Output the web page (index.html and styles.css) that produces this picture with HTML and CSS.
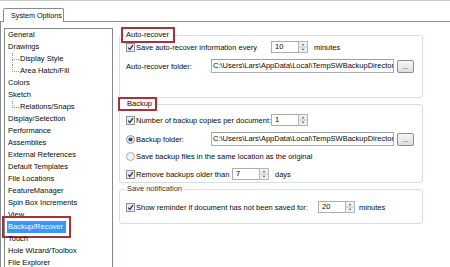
FILE: index.html
```html
<!DOCTYPE html>
<html>
<head>
<meta charset="utf-8">
<title>System Options</title>
<link rel="stylesheet" href="styles.css">
</head>
<body>
<div class="window">
  <div class="tabs"><div class="tab">System Options</div></div>
  <div class="panel">
    <ul class="tree">
      <li>General</li>
      <li>Drawings</li>
      <li class="sub mid">Display Style</li>
      <li class="sub">Area Hatch/Fill</li>
      <li>Colors</li>
      <li>Sketch</li>
      <li class="sub">Relations/Snaps</li>
      <li>Display/Selection</li>
      <li>Performance</li>
      <li>Assemblies</li>
      <li>External References</li>
      <li>Default Templates</li>
      <li>File Locations</li>
      <li>FeatureManager</li>
      <li>Spin Box Increments</li>
      <li>View</li>
      <li><span class="sel">Backup/Recover</span></li>
      <li>Touch</li>
      <li>Hole Wizard/Toolbox</li>
      <li>File Explorer</li>
    </ul>

    <div class="options">
      <fieldset class="group g1">
        <legend class="mark m-auto">Auto-recover</legend>
        <div class="row r-first">
          <label class="lbl w145"><svg class="cb" viewBox="0 0 9 9"><rect x="0.5" y="0.5" width="8" height="8" fill="#f4f6f9" stroke="#8e9095"/><rect x="1.5" y="1.5" width="6" height="6" fill="#e3e8ee"/><path d="M2.1 4.6 L3.8 6.4 L7 2.1" fill="none" stroke="#28386a" stroke-width="1.3"/></svg><span>Save auto-recover information every</span></label>
          <div class="spin"><span class="val">10</span><svg class="arrows" viewBox="0 0 10 12"><rect x="0.5" y="0.5" width="9" height="11" fill="#eef0f3" stroke="#b3b7bd"/><line x1="1" y1="6" x2="9" y2="6" stroke="#c6cacf"/><path d="M3.5 4.3 L5 2.8 L6.5 4.3 Z" fill="#4a4f57"/><path d="M3.5 7.7 L5 9.2 L6.5 7.7 Z" fill="#4a4f57"/></svg></div>
          <span class="unit">minutes</span>
        </div>
        <div class="row r-field">
          <span class="lbl w85">Auto-recover folder:</span>
          <div class="field">C:\Users\Lars\AppData\Local\TempSWBackupDirectory</div>
          <button class="browse">...</button>
        </div>
      </fieldset>

      <fieldset class="group g2">
        <legend class="mark m-backup">Backup</legend>
        <div class="row">
          <label class="lbl w145"><svg class="cb" viewBox="0 0 9 9"><rect x="0.5" y="0.5" width="8" height="8" fill="#f4f6f9" stroke="#8e9095"/><rect x="1.5" y="1.5" width="6" height="6" fill="#e3e8ee"/><path d="M2.1 4.6 L3.8 6.4 L7 2.1" fill="none" stroke="#28386a" stroke-width="1.3"/></svg><span>Number of backup copies per document:</span></label>
          <div class="spin"><span class="val">1</span><svg class="arrows" viewBox="0 0 10 12"><rect x="0.5" y="0.5" width="9" height="11" fill="#eef0f3" stroke="#b3b7bd"/><line x1="1" y1="6" x2="9" y2="6" stroke="#c6cacf"/><path d="M3.5 4.3 L5 2.8 L6.5 4.3 Z" fill="#4a4f57"/><path d="M3.5 7.7 L5 9.2 L6.5 7.7 Z" fill="#4a4f57"/></svg></div>
        </div>
        <div class="row r-field2">
          <label class="lbl w85"><svg class="cb" viewBox="0 0 9 9"><circle cx="4.5" cy="4.5" r="4" fill="#eef1f5" stroke="#8e9095"/><circle cx="4.5" cy="4.5" r="2.1" fill="#2f4f80"/></svg><span>Backup folder:</span></label>
          <div class="field">C:\Users\Lars\AppData\Local\TempSWBackupDirectory</div>
          <button class="browse">...</button>
        </div>
        <div class="row r-radio">
          <label class="lbl"><svg class="cb" viewBox="0 0 9 9"><circle cx="4.5" cy="4.5" r="4" fill="#f1f3f5" stroke="#a9acb1"/></svg><span>Save backup files in the same location as the original</span></label>
        </div>
        <div class="row r-last">
          <label class="lbl w106"><svg class="cb" viewBox="0 0 9 9"><rect x="0.5" y="0.5" width="8" height="8" fill="#f4f6f9" stroke="#8e9095"/><rect x="1.5" y="1.5" width="6" height="6" fill="#e3e8ee"/><path d="M2.1 4.6 L3.8 6.4 L7 2.1" fill="none" stroke="#28386a" stroke-width="1.3"/></svg><span>Remove backups older than</span></label>
          <div class="spin"><span class="val">7</span><svg class="arrows" viewBox="0 0 10 12"><rect x="0.5" y="0.5" width="9" height="11" fill="#eef0f3" stroke="#b3b7bd"/><line x1="1" y1="6" x2="9" y2="6" stroke="#c6cacf"/><path d="M3.5 4.3 L5 2.8 L6.5 4.3 Z" fill="#4a4f57"/><path d="M3.5 7.7 L5 9.2 L6.5 7.7 Z" fill="#4a4f57"/></svg></div>
          <span class="unit">days</span>
        </div>
      </fieldset>

      <fieldset class="group g3">
        <legend class="plain-legend">Save notification</legend>
        <div class="row">
          <label class="lbl w192"><svg class="cb" viewBox="0 0 9 9"><rect x="0.5" y="0.5" width="8" height="8" fill="#f4f6f9" stroke="#8e9095"/><rect x="1.5" y="1.5" width="6" height="6" fill="#e3e8ee"/><path d="M2.1 4.6 L3.8 6.4 L7 2.1" fill="none" stroke="#28386a" stroke-width="1.3"/></svg><span>Show reminder if document has not been saved for:</span></label>
          <div class="spin"><span class="val">20</span><svg class="arrows" viewBox="0 0 10 12"><rect x="0.5" y="0.5" width="9" height="11" fill="#eef0f3" stroke="#b3b7bd"/><line x1="1" y1="6" x2="9" y2="6" stroke="#c6cacf"/><path d="M3.5 4.3 L5 2.8 L6.5 4.3 Z" fill="#4a4f57"/><path d="M3.5 7.7 L5 9.2 L6.5 7.7 Z" fill="#4a4f57"/></svg></div>
          <span class="unit u4">minutes</span>
        </div>
      </fieldset>
    </div>
  </div>
</div>
</body>
</html>
```

FILE: styles.css
```css
* { box-sizing: border-box; }

html, body {
  margin: 0;
  padding: 0;
  background: #ffffff;
}

body {
  font-family: "Liberation Sans", Arial, sans-serif;
  font-size: 7.5px;
  color: #0a0a0a;
}

.window {
  width: 450px;
  height: 267px;
  overflow: hidden;
  border-top: 1px solid #c8cacd;
  display: flex;
  flex-direction: column;
}

.tabs {
  padding: 7px 0 0 3px;
  display: flex;
}

.tab {
  position: relative;
  z-index: 1;
  width: 61px;
  height: 14px;
  margin-bottom: -1px;
  padding: 0 0 0 7px;
  border: 1px solid #898c95;
  border-bottom: none;
  border-radius: 2px 2px 0 0;
  background: #ffffff;
  line-height: 13px;
  font-size: 7.2px;
  white-space: nowrap;
}

.panel {
  flex: 1;
  display: flex;
  align-items: flex-start;
  border-top: 1px solid #898c95;
  border-left: 1px solid #898c95;
}

/* ---------- tree list ---------- */
.tree {
  list-style: none;
  margin: 6px 0 0 3px;
  padding: 0;
  width: 109px;
  height: 260px;
  border: 1px solid #828790;
  flex-shrink: 0;
}

.tree li {
  position: relative;
  height: 12px;
  line-height: 12px;
  padding-left: 3px;
  white-space: nowrap;
}

.tree li.sub {
  padding-left: 15px;
}

.tree li.sub::before {
  content: "";
  position: absolute;
  left: 7px;
  top: 0;
  width: 6px;
  height: 6px;
  border-left: 1px dotted #9a9a9a;
  border-bottom: 1px dotted #9a9a9a;
}

.tree li.mid::after {
  content: "";
  position: absolute;
  left: 7px;
  top: 6px;
  height: 6px;
  border-left: 1px dotted #9a9a9a;
}

.sel {
  display: inline-block;
  height: 12px;
  margin-left: -1px;
  padding: 0 3px 0 1px;
  background: #3399ff;
  color: #ffffff;
  outline: 2px solid #a8313b;
  outline-offset: 3px;
}

/* ---------- options ---------- */
.options {
  margin: 8px 0 0 6px;
  display: flex;
  flex-direction: column;
}

.group {
  width: 304px;
  margin: 0;
  min-width: 0;
  border: 1px solid #d5dfe5;
  border-radius: 3px;
  padding: 0 0 0 6px;
}

.g1 { padding-top: 1px; padding-bottom: 24px; }
.g2 { margin-top: 2px; padding-top: 6px; padding-bottom: 2px; }
.g3 { margin-top: 1px; padding-top: 7px; padding-bottom: 10px; }

legend {
  padding: 0 2px;
  margin-left: -2px;
  line-height: 10px;
}

.mark {
  outline: 2px solid #a8313b;
  outline-offset: 1px;
}

.m-auto {
  line-height: 10px;
  padding: 0 3px 0 2px;
}

.m-backup {
  line-height: 8px;
  margin-left: -5px;
  padding: 0 2px 0 6px;
}

.plain-legend {
  margin-left: -1px;
  color: #333333;
}

.row {
  display: flex;
  align-items: center;
  height: 12px;
  white-space: nowrap;
}

.r-field { height: 14px; margin-top: 6px; }
.r-field2 { height: 14px; margin-top: 6px; }
.r-radio { margin-top: 4px; }
.r-last { margin-top: 6px; }

.lbl {
  display: flex;
  align-items: center;
  flex-shrink: 0;
}

.w85 { width: 85px; }
.w106 { width: 106px; }
.w145 { width: 145px; }
.w192 { width: 192px; }

.cb {
  width: 9px;
  height: 9px;
  margin-right: 1px;
  flex-shrink: 0;
}

.spin {
  display: flex;
  width: 37px;
  height: 12px;
}

.spin .val {
  flex: 1;
  border: 1px solid #abadb3;
  border-right: none;
  background: #ffffff;
  line-height: 10px;
  padding-left: 3px;
}

.spin .arrows {
  width: 10px;
  height: 12px;
}

.unit {
  margin-left: 6px;
}

.u4 { margin-left: 4px; }

.field {
  width: 183px;
  height: 14px;
  border: 1px solid #abadb3;
  border-top-color: #9c9fa6;
  background: #ffffff;
  line-height: 12px;
  padding-left: 1px;
  overflow: hidden;
  white-space: nowrap;
}

.browse {
  width: 17px;
  height: 13px;
  margin: 0 0 0 3px;
  padding: 0;
  border: 1px solid #8a8d92;
  border-radius: 2px;
  background: linear-gradient(#f6f6f6, #dedede);
  font-family: "Liberation Sans", Arial, sans-serif;
  font-size: 7px;
  line-height: 9px;
  color: #333333;
}
```
